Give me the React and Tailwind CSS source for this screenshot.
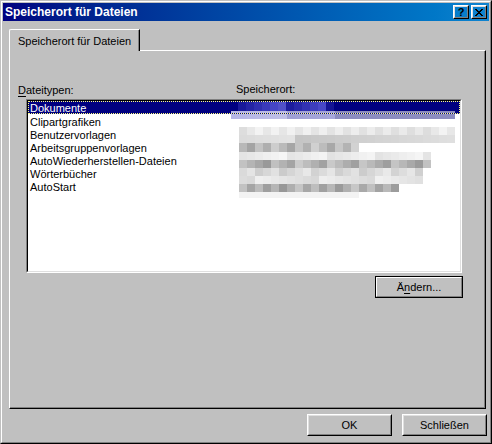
import React from "react";

const rows = [
  "Clipartgrafiken",
  "Benutzervorlagen",
  "Arbeitsgruppenvorlagen",
  "AutoWiederherstellen-Dateien",
  "Wörterbücher",
  "AutoStart",
];

// pixelated (blurred) location column, one entry per 8px band
const blurRows = [
  { base: 232, spread: 22, n: 27, h: 8 },
  { base: 212, spread: 30, n: 27, h: 8 },
  { base: 188, spread: 48, n: 15, h: 9 },
  { base: 236, spread: 20, n: 24, h: 8 },
  { base: 178, spread: 50, n: 24, h: 8 },
  { base: 218, spread: 30, n: 23, h: 8 },
  { base: 228, spread: 24, n: 23, h: 8 },
  { base: 174, spread: 50, n: 20, h: 8 },
  { base: 242, spread: 12, n: 15, h: 6 },
];

const rnd = (r, c) => ((r * 131 + c * 57 + r * c * 13) % 23) / 22;

const gray = (v) => {
  const x = Math.max(0, Math.min(250, Math.round(v)));
  return `rgb(${x},${x},${x})`;
};

const RaisedButton = ({ children, className = "" }) => (
  <div className={`border border-t-white border-l-white border-r-black border-b-black ${className}`}>
    <div className="w-full h-full border border-t-[#dfdfdf] border-l-[#dfdfdf] border-r-[#808080] border-b-[#808080] flex items-center justify-center">
      {children}
    </div>
  </div>
);

const LavBand = ({ h }) => (
  <div className={`flex w-[226px] ${h}`}>
    {Array.from({ length: 28 }).map((_, i) => {
      const k = i < 13 ? 160 + rnd(1, i) * 30 : 140;
      return (
        <div
          key={i}
          className="h-full w-[8px] shrink-0"
          style={{ background: `rgb(${k},${k},${Math.min(230, k + 52)})` }}
        />
      );
    })}
  </div>
);

const App = () => {
  return (
    <div
      className="w-[492px] h-[444px] bg-[#c0c0c0] border border-t-[#c0c0c0] border-l-[#c0c0c0] border-r-black border-b-black text-black text-[11px]"
      style={{ fontFamily: '"Liberation Sans", Arial, sans-serif' }}
    >
      <div className="w-full h-full border border-t-white border-l-white border-r-[#808080] border-b-[#808080] p-px flex flex-col">
        {/* title bar */}
        <div className="h-[18px] shrink-0 flex items-center bg-gradient-to-r from-[#000080] to-[#1084d0] pl-[2px] pr-[2px]">
          <span className="text-white font-bold text-[12px] leading-[18px] flex-1">Speicherort für Dateien</span>
          <RaisedButton className="w-[16px] h-[14px]">
            <span className="font-bold text-[11px] leading-none">?</span>
          </RaisedButton>
          <RaisedButton className="w-[16px] h-[14px] ml-[2px]">
            <svg width="8" height="7" viewBox="0 0 8 7" shapeRendering="crispEdges">
              <path d="M0 0h2v1H0zM6 0h2v1H6zM1 1h2v1H1zM5 1h2v1H5zM2 2h4v1H2zM3 3h2v1H3zM2 4h4v1H2zM1 5h2v1H1zM5 5h2v1H5zM0 6h2v1H0zM6 6h2v1H6z" fill="#000" />
            </svg>
          </RaisedButton>
        </div>

        {/* tab control */}
        <div className="mt-[8px] pl-[6px] pr-[3px]">
          <div className="flex">
            <div className="relative z-10 -mb-px w-[131px] h-[22px] bg-[#c0c0c0] border-t border-l border-r border-t-white border-l-white border-r-black rounded-tl-[2px]">
              <div className="h-full border-r border-r-[#808080] pl-[8px] pt-[5px] leading-[13px]">
                Speicherort für Dateien
              </div>
            </div>
          </div>
          <div className="h-[359px] border border-t-white border-l-white border-r-black border-b-black">
            <div className="h-full border-r border-b border-r-[#808080] border-b-[#808080] pt-[33px]">
              <div className="flex leading-[13px]">
                <div className="w-[226px] pl-[8px]">
                  <u className="underline-offset-2">D</u>ateitypen:
                </div>
                <div className="-mt-[1px]">Speicherort:</div>
              </div>

              {/* list box */}
              <div className="ml-[16px] mt-[2px] w-[436px] h-[174px] border border-t-[#808080] border-l-[#808080] border-r-white border-b-white">
                <div className="h-full border border-t-black border-l-black border-r-[#dfdfdf] border-b-[#dfdfdf] bg-white leading-[13px] overflow-hidden">
                  <div className="flex h-[13px] bg-[#000080] border border-dotted border-[#ffff7f] text-white">
                    <div className="w-[202px] pl-[1px] pt-[1px] leading-[11px]">Dokumente</div>
                    <div className="flex-1 flex flex-col">
                      <div className="flex h-[9px] pl-[7px]">
                        {Array.from({ length: 12 }).map((_, i) => {
                          const k = Math.round(20 + rnd(3, i) * 60);
                          return (
                            <div
                              key={i}
                              className="h-full w-[8px] shrink-0"
                              style={{ background: `rgb(${k},${k},${Math.min(200, 128 + k)})` }}
                            />
                          );
                        })}
                      </div>
                      <LavBand h="h-[2px]" />
                    </div>
                  </div>
                  <div className="flex">
                    <div className="w-[203px]">
                      {rows.map((r) => (
                        <div key={r} className="h-[13px] pl-[2px] pt-[2px] whitespace-nowrap">
                          {r}
                        </div>
                      ))}
                    </div>
                    <div className="flex-1 flex flex-col">
                      <LavBand h="h-[5px]" />
                      <div className="mt-[8px] ml-[8px] flex flex-col">
                        {blurRows.map((b, r) => (
                          <div key={r} className="flex" style={{ height: b.h }}>
                            {Array.from({ length: b.n }).map((_, c) => (
                              <div
                                key={c}
                                className="h-full w-[8px] shrink-0"
                                style={{ background: gray(b.base - b.spread / 2 + rnd(r, c) * b.spread) }}
                              />
                            ))}
                          </div>
                        ))}
                      </div>
                    </div>
                  </div>
                </div>
              </div>

              <div className="ml-[365px] mt-[3px] w-[88px] h-[22px] border border-black">
                <div className="w-full h-full border border-t-white border-l-white border-r-[#808080] border-b-[#808080] flex items-center justify-center">
                  <span>
                    Ä<u className="underline-offset-2">n</u>dern...
                  </span>
                </div>
              </div>
            </div>
          </div>
        </div>

        {/* dialog buttons */}
        <div className="mt-[5px] flex justify-end gap-[10px] pr-[2px]">
          <RaisedButton className="w-[85px] h-[22px]">OK</RaisedButton>
          <RaisedButton className="w-[85px] h-[22px]">Schließen</RaisedButton>
        </div>
      </div>
    </div>
  );
};

export default App;
